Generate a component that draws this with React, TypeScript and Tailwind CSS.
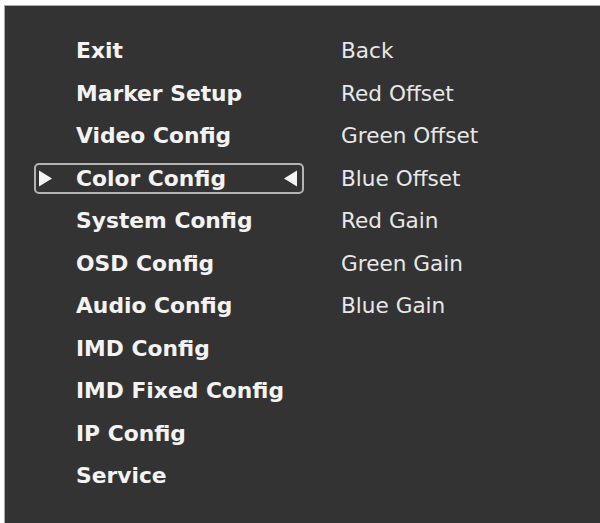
import React from "react";

const mainItems = [
  "Exit",
  "Marker Setup",
  "Video Config",
  "Color Config",
  "System Config",
  "OSD Config",
  "Audio Config",
  "IMD Config",
  "IMD Fixed Config",
  "IP Config",
  "Service",
];

const subItems = [
  "Back",
  "Red Offset",
  "Green Offset",
  "Blue Offset",
  "Red Gain",
  "Green Gain",
  "Blue Gain",
];

const SELECTED = 3;

function Arrow({ dir }: { dir: "right" | "left" }) {
  return (
    <svg width="15" height="17" viewBox="0 0 15 17" className="shrink-0">
      {dir === "right" ? (
        <polygon points="1,0.5 14,8.5 1,16.5" fill="#f4f4f4" />
      ) : (
        <polygon points="14,0.5 1,8.5 14,16.5" fill="#f4f4f4" />
      )}
    </svg>
  );
}

export default function App() {
  return (
    <div className="w-[600px] h-[523px] bg-white pl-[4px] pt-[5px] overflow-hidden">
      <div
        className="h-full w-full bg-[#333333] border-l border-t border-[#a8a8a8] flex pt-[24px] pl-[29px]"
        style={{ fontFamily: '"DejaVu Sans", Verdana, sans-serif' }}
      >
        <div className="flex flex-col w-[270px]">
          {mainItems.map((label, i) => {
            const sel = i === SELECTED;
            return (
              <div key={label} className="h-[42.5px] flex items-center">
                <div
                  className={`h-[31px] w-full rounded-[5px] border-2 flex items-center pl-[2px] pr-[4px] ${
                    sel ? "border-[#b4b4b4]" : "border-transparent"
                  }`}
                >
                  <div className="w-[15px] shrink-0">{sel && <Arrow dir="right" />}</div>
                  <span className="flex-1 pl-[23px] text-[21.8px] font-bold text-[#f3f3f3] leading-none whitespace-nowrap">
                    {label}
                  </span>
                  <div className="w-[15px] shrink-0">{sel && <Arrow dir="left" />}</div>
                </div>
              </div>
            );
          })}
        </div>
        <div className="flex flex-col ml-[37px]">
          {subItems.map((label) => (
            <div
              key={label}
              className="h-[42.5px] flex items-center text-[21.6px] text-[#e8e8e8] leading-none whitespace-nowrap"
            >
              {label}
            </div>
          ))}
        </div>
      </div>
    </div>
  );
}
